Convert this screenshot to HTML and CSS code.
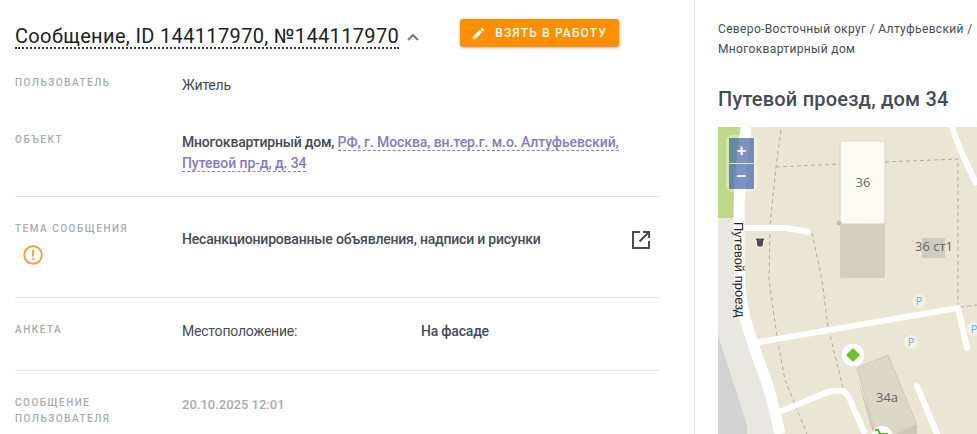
FILE: index.html
```html
<!DOCTYPE html>
<html lang="ru">
<head>
<meta charset="utf-8">
<title>Сообщение</title>
<link rel="stylesheet" href="styles.css">
</head>
<body>
<div class="page">
  <main class="details">
    <header class="head">
      <h1 class="title">Сообщение, ID 144117970, №144117970</h1>
      <svg class="chevron" viewBox="0 0 12 8" width="12" height="8"><path d="M1 7l5-5 5 5" fill="none" stroke="#6b7680" stroke-width="1.8"/></svg>
      <button class="take" type="button">
        <svg viewBox="0 0 24 24" width="15" height="15"><path fill="#fff" d="M3 17.25V21h3.75L17.81 9.94l-3.75-3.75L3 17.25zM20.71 7.04a1 1 0 0 0 0-1.41l-2.34-2.34a1 1 0 0 0-1.41 0l-1.83 1.83 3.75 3.75 1.83-1.83z"/></svg>
        <span>Взять в работу</span>
      </button>
    </header>

    <section class="row row-user">
      <div class="label">Пользователь</div>
      <div class="value">Житель</div>
    </section>

    <section class="row row-object ruled">
      <div class="label">Объект</div>
      <div class="value strong">Многоквартирный дом, <a class="link">РФ, г. Москва, вн.тер.г. м.о. Алтуфьевский, Путевой пр-д, д. 34</a></div>
    </section>

    <section class="row row-topic ruled">
      <div class="label">Тема сообщения
        <svg class="warn" viewBox="0 0 20 20" width="20" height="20"><circle cx="10" cy="10" r="8.8" fill="none" stroke="#ff9d2e" stroke-width="1.9"/><rect x="9.1" y="5" width="1.8" height="6.6" fill="#ff9d2e"/><rect x="9.1" y="13" width="1.8" height="1.9" fill="#ff9d2e"/></svg>
      </div>
      <div class="value strong topic">
        <span>Несанкционированные объявления, надписи и рисунки</span>
        <svg class="open" viewBox="0 0 20 20" width="20" height="20"><path fill="none" stroke="#454b57" stroke-width="2" d="M9 2H2v16h16v-7M12 1.9h6.1V8M18 2L8.5 11.5"/></svg>
      </div>
    </section>

    <section class="row row-form ruled">
      <div class="label">Анкета</div>
      <div class="value pair"><span class="key">Местоположение:</span><span class="strong">На фасаде</span></div>
    </section>

    <section class="row row-msg">
      <div class="label">Сообщение пользователя</div>
      <div class="value strong muted">20.10.2025 12:01</div>
    </section>
  </main>

  <aside class="side">
    <p class="crumbs">Северо-Восточный округ / Алтуфьевский / Многоквартирный дом</p>
    <h2 class="address">Путевой проезд, дом 34</h2>
    <div class="map">
      <svg class="map-art" viewBox="0 0 259 307" width="259" height="307">
        <rect width="259" height="307" fill="#ebe6d3"/>
        <path d="M0 0H24L17 91H0z" fill="#bcd987"/>
        <path d="M0 91H17L22 186 60 307H0z" fill="#e8e8e0"/>
        <path d="M0 208L29 298V307H0z" fill="#d3d3d3"/>
        <g fill="none" stroke="#b5b09c" stroke-width="1" stroke-dasharray="4 3">
          <path d="M63 3L58 40 52 98 51 153 60 216 67 253 89 307"/>
          <path d="M58 40L122 37"/>
          <path d="M167 35L240 32V181"/>
          <path d="M94 106L104 153 110 200 125 261"/>
          <path d="M242 180L259 178"/>
        </g>
        <g fill="none" stroke="#fff" stroke-linecap="butt" stroke-linejoin="round">
          <path d="M20 101H68L92 105" stroke-width="6"/>
          <path d="M35 216L240 181" stroke-width="6"/>
          <path d="M240 181L249 221" stroke-width="6" stroke-linecap="round"/>
          <path d="M59 286L110 265Q118 263 125 264C130 267 133 274 135 280L147 307" stroke-width="6"/>
          <path d="M199 259L219 307" stroke-width="6" stroke-linecap="round"/>
          <path d="M234 0C240 20 250 40 259 58" stroke-width="6"/>
          <path d="M28 0C24 30 21 60 21 88C21 130 20 160 26 186C30 205 40 232 48 253C54 270 58 290 62 307" stroke-width="11"/>
        </g>
        <rect x="122" y="97" width="45" height="54" rx="2" fill="#d5cfc0"/>
        <rect x="122" y="14" width="45" height="83" rx="2" fill="#fdfcf4" stroke="#d8d4c2"/>
        <circle cx="121" cy="96" r="2.5" fill="#c4c2b4"/>
        <rect x="204" y="111" width="23" height="20" fill="#cfccc2"/>
        <path d="M138 246L155 307H175L199 298V307H165L159 310z" fill="#cdc9b6"/>
        <path d="M139 241L170 228 199 298 159 310z" fill="#dcd8c5" stroke="#cfcbb8"/>
        <path d="M37 111h10v2h-1l-1 7h-6l-1-7h-1z" fill="#4a4a4a" stroke="#fff" stroke-width="1"/>
        <circle cx="135" cy="228" r="12" fill="#fff" stroke="#e2dfd0"/>
        <path d="M135 221l7 7-7 7-7-7z" fill="#6fbf2f"/>
        <circle cx="164" cy="310" r="11" fill="#fff"/>
        <path d="M157 303h3l2 4h8" fill="none" stroke="#55b02a" stroke-width="2"/>
        <circle cx="201" cy="174" r="7" fill="#f3f1e6"/>
        <circle cx="193" cy="215" r="7" fill="#f3f1e6"/>
        <circle cx="256" cy="202" r="7" fill="#f3f1e6"/>
        <text class="t-num" x="145" y="60">36</text>
        <text class="t-num" x="216" y="124">36 ст1</text>
        <text class="t-num" x="169" y="275">34а</text>
        <text class="t-p" x="201" y="178">P</text>
        <text class="t-p" x="193" y="219">P</text>
        <text class="t-p" x="256" y="206">P</text>
        <text class="t-road" transform="translate(16 95) rotate(89)">Путевой проезд</text>
      </svg>
      <div class="zoom">
        <span class="zoom-btn">+</span>
        <span class="zoom-btn zoom-out">−</span>
      </div>
    </div>
  </aside>
</div>
</body>
</html>
```
FILE: styles.css
```css
html, body { margin: 0; padding: 0; height: 434px; overflow: hidden; background: #fff; }
body { font-family: Roboto, "Liberation Sans", sans-serif; color: #454b57; font-size: 14px; }
.page { display: flex; height: 434px; overflow: hidden; }

.details { width: 644px; padding: 19px 35px 0 15px; border-right: 1px solid #e3e3e3; flex: none; }
.head { display: flex; align-items: center; height: 28px; margin-bottom: 21px; }
.title { margin: 6px 0 0; font-size: 20px; font-weight: 400; line-height: 24px; letter-spacing: .35px; color: #212121; border-bottom: 2px dotted #333; height: 23px; white-space: nowrap; }
.chevron { margin: 7px 0 0 8px; }
.take { display: flex; align-items: center; gap: 9px; height: 28px; width: 159px; margin-left: 41px; padding: 0 0 0 11px; border: 0; border-radius: 3px; background: #ff8f00; color: #fff; font: 500 12px Roboto, sans-serif; letter-spacing: 1.15px; text-transform: uppercase; box-shadow: 0 1px 3px rgba(0,0,0,.3); }

.row { display: grid; grid-template-columns: 167px 1fr; }
.ruled { border-bottom: 1px solid #e3e3e3; }
.label { font-size: 10px; line-height: 16px; font-weight: 500; letter-spacing: 1.5px; text-transform: uppercase; color: #a9abb0; }
.value { line-height: 21px; letter-spacing: -.2px; }
.strong { font-weight: 500; }
.muted { color: #a9abb0; font-size: 13px; letter-spacing: 0; }
.link { color: #8a78c9; border-bottom: 1px dashed #8a78c9; letter-spacing: -.08px; }

.row-user { height: 64px; }
.row-user .label { margin-top: 7px; }
.row-user .value { margin-top: 7px; }
.row-object { height: 64px; }
.row-object .value { padding-right: 20px; line-height: 21px; }
.row-topic { padding-top: 24px; height: 76px; }
.warn { display: block; margin: 8px 0 0 8px; }
.topic { display: flex; justify-content: space-between; margin-top: 8px; }
.open { margin-top: 1px; margin-right: 8px; }
.row-form { padding-top: 24px; height: 48px; }
.row-form .value { margin-top: -1px; }
.pair { display: grid; grid-template-columns: 239px 1fr; }
.row-msg { padding-top: 24px; }
.row-msg .value { margin-top: -1px; }

.side { flex: 1; min-width: 0; padding: 19px 0 0 23px; overflow: hidden; }
.crumbs { margin: 0; width: 259px; font-size: 12px; line-height: 20px; letter-spacing: .35px; color: #454b57; }
.address { margin: 28px 0 16px; font-size: 20px; font-weight: 500; line-height: 24px; letter-spacing: .2px; color: #454b57; }
.map { position: relative; width: 259px; height: 307px; }
.map-art { display: block; }
.zoom { position: absolute; left: 11px; top: 11px; width: 25px; display: flex; flex-direction: column; border-radius: 3px; box-shadow: 0 0 0 3px rgba(255,255,255,.35); }
.zoom-btn { height: 25px; display: flex; align-items: center; justify-content: center; background: rgba(70,105,175,.72); color: #fff; font: 700 17px/1 "Liberation Sans", sans-serif; }
.zoom-out { border-top: 1px solid rgba(255,245,180,.85); }
.t-num { font: 13px "Open Sans", sans-serif; fill: #666; text-anchor: middle; }
.t-p { font: 11px "Open Sans", sans-serif; fill: #6fb1e0; text-anchor: middle; }
.t-road { font: 13px "Liberation Sans", sans-serif; fill: #222; }
```
